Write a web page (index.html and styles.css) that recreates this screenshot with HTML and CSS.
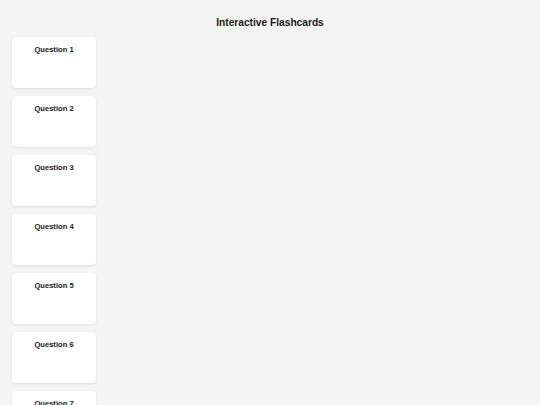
FILE: index.html
```html
<!DOCTYPE html>
<html>
<head>
<meta charset="utf-8">
<link rel="stylesheet" href="styles.css">
</head>
<body>
<h1 class="title">Interactive Flashcards</h1>
<div class="deck">
  <div class="card"><div class="question">Question 1</div></div>
  <div class="card"><div class="question">Question 2</div></div>
  <div class="card"><div class="question">Question 3</div></div>
  <div class="card"><div class="question">Question 4</div></div>
  <div class="card"><div class="question">Question 5</div></div>
  <div class="card"><div class="question">Question 6</div></div>
  <div class="card"><div class="question">Question 7</div></div>
</div>
</body>
</html>
```
FILE: styles.css
```css
html, body {
  margin: 0;
  padding: 0;
  background: #f5f5f5;
  font-family: "Liberation Sans", Arial, sans-serif;
  color: #1a1a1a;
}
body {
  padding: 0 12px;
}
.title {
  margin: 16px 0 7px;
  font-size: 10.2px;
  line-height: 14px;
  font-weight: bold;
  text-align: center;
}
.deck {
  display: flex;
  flex-direction: column;
  gap: 8px;
}
.card {
  width: 84px;
  height: 51px;
  box-sizing: border-box;
  background: #fff;
  border-radius: 4px;
  box-shadow: 0 1px 3px rgba(0, 0, 0, 0.1);
  padding-top: 6.5px;
  text-align: center;
}
.question {
  font-size: 7.6px;
  line-height: 11px;
  font-weight: bold;
}
```
